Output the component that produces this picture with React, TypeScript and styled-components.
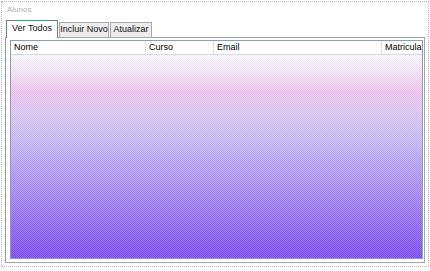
import React from 'react';
import styled, { createGlobalStyle } from 'styled-components';

const GlobalStyle = createGlobalStyle`
  html, body {
    margin: 0;
    padding: 0;
    background: #fff;
  }
  body {
    font-family: 'Liberation Sans', Arial, sans-serif;
    font-size: 9px;
    color: #000;
  }
`;

type Column = { title: string; width: number; align?: 'left' | 'right' };

const columns: Column[] = [
  { title: 'Nome', width: 135 },
  { title: 'Curso', width: 68 },
  { title: 'Email', width: 168 },
  { title: 'Matricula', width: 38, align: 'right' },
];

const tabs = [
  { label: 'Ver Todos', width: 52 },
  { label: 'Incluir Novo', width: 50 },
  { label: 'Atualizar', width: 42 },
];

const App = () => {
  return (
    <>
      <GlobalStyle />
      <Frame>
        <Legend>Alunos</Legend>
        <TabStrip>
          {tabs.map((t, i) => (
            <Tab key={t.label} $active={i === 0} $width={t.width}>
              {t.label}
            </Tab>
          ))}
        </TabStrip>
        <Panel>
          <ListView>
            <Header>
              {columns.map((c) => (
                <HeaderCell key={c.title} $width={c.width} $align={c.align}>
                  {c.title}
                </HeaderCell>
              ))}
            </Header>
            <Rows />
          </ListView>
        </Panel>
      </Frame>
    </>
  );
};

export default App;

const Frame = styled.div`
  position: relative;
  box-sizing: border-box;
  width: 428px;
  height: 266px;
  margin: 1px 0 0 1px;
  border: 1px dotted #b8b8b8;
  padding: 2px 2px 0 3px;
  display: flex;
  flex-direction: column;
`;

const Legend = styled.div`
  height: 13px;
  line-height: 11px;
  padding-left: 2px;
  color: #b0b0b0;
  font-size: 8px;
`;

const TabStrip = styled.div`
  display: flex;
  align-items: flex-end;
  height: 18px;
  margin-top: 3px;
  padding-left: 1px;
`;

const Tab = styled.div<{ $active?: boolean; $width: number }>`
  box-sizing: border-box;
  width: ${(p) => p.$width}px;
  height: ${(p) => (p.$active ? '18px' : '16px')};
  line-height: ${(p) => (p.$active ? '15px' : '13px')};
  text-align: center;
  margin-right: 1px;
  border: 1px solid ${(p) => (p.$active ? '#5a8a88' : '#a8a8a8')};
  border-bottom: ${(p) => (p.$active ? 'none' : '1px solid #a8a8a8')};
  background: ${(p) => (p.$active ? '#fff' : '#ececec')};
  color: #111;
  white-space: nowrap;
  overflow: hidden;
  position: relative;
  z-index: ${(p) => (p.$active ? 2 : 1)};
`;

const Panel = styled.div`
  flex: 1;
  margin-bottom: 3px;
  margin-right: 1px;
  box-sizing: border-box;
  border: 1px solid #9aa6b0;
  padding: 2px 3px 3px 4px;
  display: flex;
  margin-top: -1px;
`;

const ListView = styled.div`
  flex: 1;
  box-sizing: border-box;
  border: 1px solid #8f9fae;
  display: flex;
  flex-direction: column;
  background: #fff;
`;

const Header = styled.div`
  display: flex;
  height: 13px;
  border-bottom: 1px solid #d8d8e8;
  background: #fff;
`;

const HeaderCell = styled.div<{ $width: number; $align?: 'left' | 'right' }>`
  flex: ${(p) => (p.$align === 'right' ? '1 1 auto' : `0 0 ${p.$width}px`)};
  box-sizing: border-box;
  padding: 0 2px 0 3px;
  line-height: 13px;
  text-align: ${(p) => p.$align || 'left'};
  border-right: 1px dotted #c8c8d0;
  white-space: nowrap;
  &:last-child {
    border-right: none;
    padding-right: 0;
  }
`;

const Rows = styled.div`
  flex: 1;
  position: relative;
  background: linear-gradient(
    to bottom,
    #ffffff 0%,
    #f8eaf8 8%,
    #f2c8f0 18%,
    #e0ccf6 28%,
    #ccc0f6 40%,
    #b8a4f6 55%,
    #a488f4 70%,
    #9068f2 85%,
    #7c4ef0 100%
  );
  &::after {
    content: '';
    position: absolute;
    inset: 0;
    background: repeating-conic-gradient(
      rgba(255, 255, 255, 0.14) 0 25%,
      rgba(60, 30, 160, 0.08) 0 50%
    );
    background-size: 2px 2px;
  }
`;
